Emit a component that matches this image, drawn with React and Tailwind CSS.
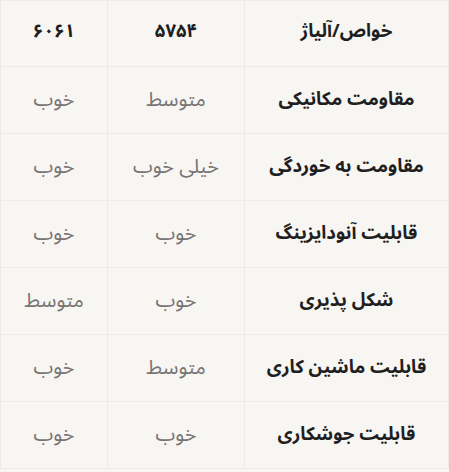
import React from "react";

const rows = [
  ["مقاومت مکانیکی", "متوسط", "خوب"],
  ["مقاومت به خوردگی", "خیلی خوب", "خوب"],
  ["قابلیت آنودایزینگ", "خوب", "خوب"],
  ["شکل پذیری", "خوب", "متوسط"],
  ["قابلیت ماشین کاری", "متوسط", "خوب"],
  ["قابلیت جوشکاری", "خوب", "خوب"],
];

export default function App() {
  return (
    <div
      dir="rtl"
      className="w-[449px] h-[472px] bg-[#f7f6f3]"
      style={{ fontFamily: '"Noto Sans Arabic", "Vazirmatn", "DejaVu Sans", sans-serif' }}
    >
      <table className="w-[448px] border-collapse border border-[#eeebe7] table-fixed">
        <colgroup>
          <col className="w-[204px]" />
          <col className="w-[137px]" />
          <col className="w-[107px]" />
        </colgroup>
        <thead>
          <tr className="h-[66px]">
            <th className="border border-[#eeebe7] text-[18.5px] font-bold text-[#1f1f1f] text-center pb-[3px]">خواص/آلیاژ</th>
            <th className="border border-[#eeebe7] text-[18.5px] font-bold text-[#1f1f1f] text-center pb-[3px]">۵۷۵۴</th>
            <th className="border border-[#eeebe7] text-[18.5px] font-bold text-[#1f1f1f] text-center pb-[3px]">۶۰۶۱</th>
          </tr>
        </thead>
        <tbody>
          {rows.map((r, i) => (
            <tr key={i} className="h-[67px]">
              <td className="border border-[#eeebe7] text-[18.5px] font-bold text-[#1f1f1f] text-center">{r[0]}</td>
              <td className="border border-[#eeebe7] text-[20px] text-[#787473] text-center">{r[1]}</td>
              <td className="border border-[#eeebe7] text-[20px] text-[#787473] text-center">{r[2]}</td>
            </tr>
          ))}
        </tbody>
      </table>
    </div>
  );
}
